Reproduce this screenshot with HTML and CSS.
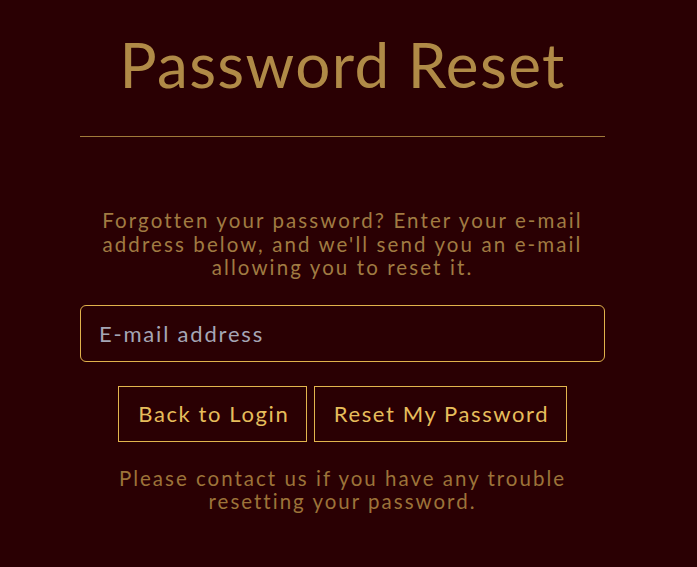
FILE: index.html
```html
<!DOCTYPE html>
<html>
<head>
<meta charset="utf-8">
<link rel="stylesheet" href="styles.css">
</head>
<body>
<main class="reset">
  <h1 class="title">Password Reset</h1>
  <hr class="rule">
  <p class="intro">Forgotten your password? Enter your e-mail address below, and we'll send you an e-mail allowing you to reset it.</p>
  <input class="email" type="email" placeholder="E-mail address">
  <div class="actions">
    <a class="btn" href="#">Back to Login</a>
    <button class="btn" type="button">Reset My Password</button>
  </div>
  <p class="note">Please contact us if you have any trouble resetting your password.</p>
</main>
</body>
</html>
```

FILE: styles.css
```css
html, body {
  margin: 0;
  padding: 0;
  background: #2a0003;
}
body {
  font-family: Lato, "Open Sans", sans-serif;
}
.reset {
  width: 525px;
  margin-left: 80px;
  display: flex;
  flex-direction: column;
  align-items: center;
}
.title {
  margin: 28px 0 0;
  font-size: 62px;
  font-weight: 400;
  letter-spacing: 1.35px;
  color: #b08a47;
  line-height: 72px;
}
.rule {
  width: 100%;
  margin: 36px 0 0;
  border: 0;
  border-top: 1px solid #a07a3a;
}
.intro {
  margin: 72px 0 0;
  font-size: 20.5px;
  letter-spacing: 2.1px;
  line-height: 23.5px;
  color: #a07b42;
  text-align: center;
  padding: 0 10px;
}
.email {
  box-sizing: border-box;
  width: 100%;
  height: 57px;
  margin-top: 25px;
  padding: 0 18px;
  border: 1px solid #e0b24c;
  border-radius: 6px;
  background: transparent;
  font-family: inherit;
  font-size: 22px;
  letter-spacing: 1.8px;
  color: #c9c9d3;
  outline: none;
}
.email::placeholder {
  color: #a5a6b5;
}
.actions {
  display: flex;
  gap: 7px;
  margin-top: 24px;
}
.btn {
  box-sizing: border-box;
  height: 56px;
  padding: 0 16.5px 0 19px;
  display: flex;
  align-items: center;
  border: 1px solid #e2b54e;
  background: transparent;
  color: #e6bd5c;
  font-family: inherit;
  font-size: 22px;
  letter-spacing: 1.6px;
  text-decoration: none;
}
.note {
  margin: 25px 0 0;
  font-size: 20.5px;
  letter-spacing: 2px;
  line-height: 23.5px;
  color: #9c7339;
  text-align: center;
  padding: 0 20px;
}
```
